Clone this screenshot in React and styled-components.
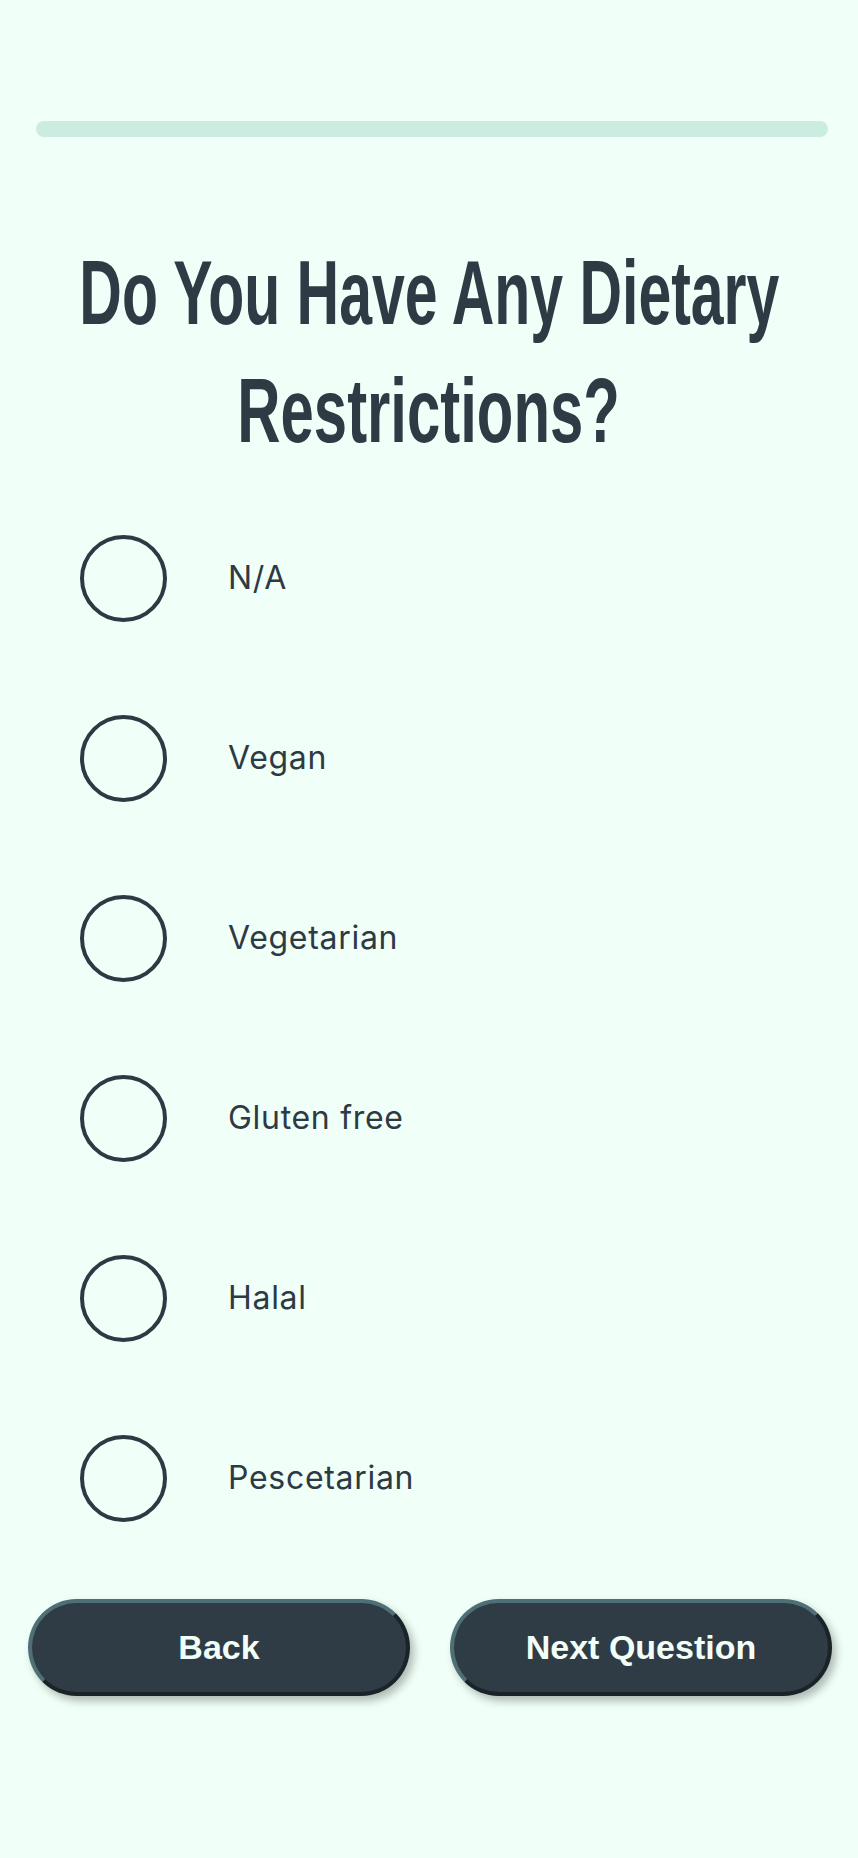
import React, { useState } from "react";
import styled, { createGlobalStyle } from "styled-components";

const GlobalStyle = createGlobalStyle`
  html, body {
    margin: 0;
    padding: 0;
    background: #f0fff7;
  }
  body {
    font-family: "Liberation Sans", Arial, sans-serif;
    color: #2d3a44;
  }
  * { box-sizing: border-box; }
`;

const Page = styled.main`
  min-height: 1858px;
  padding-top: 121px;
  display: flex;
  flex-direction: column;
`;

const Progress = styled.div`
  height: 16px;
  margin: 0 30px 0 36px;
  border-radius: 8px;
  background: #cbece1;
  overflow: hidden;
`;

const ProgressFill = styled.div`
  height: 100%;
  background: #2d3a44;
`;

const Title = styled.h1`
  margin: 97px 0 0;
  font-family: "Liberation Sans", Arial, sans-serif;
  font-weight: 700;
  font-size: 90px;
  line-height: 118px;
  color: #2e3b45;
  display: flex;
  flex-direction: column;
`;

const TitleLine = styled.span`
  display: flex;
  justify-content: center;
  white-space: nowrap;
  & > span {
    display: inline-block;
    transform: scaleX(${(p) => p.$scale});
    transform-origin: center;
  }
`;

const Options = styled.div`
  margin-top: 18px;
  padding-left: 80px;
  display: flex;
  flex-direction: column;
`;

const Option = styled.label`
  height: 180px;
  display: flex;
  align-items: center;
  gap: 61px;
  cursor: pointer;
`;

const Radio = styled.input.attrs({ type: "radio" })`
  appearance: none;
  -webkit-appearance: none;
  margin: 0;
  width: 87px;
  height: 87px;
  flex: 0 0 87px;
  border-radius: 50%;
  border: 4px solid #2d3a44;
  background: transparent;
  cursor: pointer;
  &:checked {
    background: radial-gradient(circle, #2d3a44 0 22px, transparent 23px);
  }
`;

const OptionText = styled.span`
  font-family: Inter, "Noto Sans", sans-serif;
  font-size: 32px;
  letter-spacing: 0.7px;
  font-weight: 400;
  color: #2d3a44;
  line-height: 1;
`;

const Actions = styled.div`
  margin-top: 31px;
  padding: 0 26px 0 28px;
  display: flex;
  justify-content: space-between;
`;

const Button = styled.button`
  width: 382px;
  height: 97px;
  border-radius: 50px;
  border: 4px solid;
  border-color: #4f6f76 #1a2428 #1a2428 #4f6f76;
  background: #2f3c46;
  color: #f2fff8;
  font-family: "Liberation Sans", Arial, sans-serif;
  font-weight: 700;
  font-size: 34px;
  box-shadow: 4px 5px 8px rgba(0, 0, 0, 0.28);
  cursor: pointer;
  display: flex;
  align-items: center;
  justify-content: center;
  padding: 0;
`;

const OPTIONS = ["N/A", "Vegan", "Vegetarian", "Gluten free", "Halal", "Pescetarian"];

export default function App() {
  const [value, setValue] = useState(null);
  return (
    <>
      <GlobalStyle />
      <Page>
        <Progress>
          <ProgressFill style={{ width: "0%" }} />
        </Progress>
        <Title>
          <TitleLine $scale={0.655}>
            <span>Do You Have Any Dietary</span>
          </TitleLine>
          <TitleLine $scale={0.665}>
            <span>Restrictions?</span>
          </TitleLine>
        </Title>
        <Options>
          {OPTIONS.map((o) => (
            <Option key={o}>
              <Radio
                name="diet"
                value={o}
                checked={value === o}
                onChange={() => setValue(o)}
              />
              <OptionText>{o}</OptionText>
            </Option>
          ))}
        </Options>
        <Actions>
          <Button type="button">Back</Button>
          <Button type="button">Next Question</Button>
        </Actions>
      </Page>
    </>
  );
}
